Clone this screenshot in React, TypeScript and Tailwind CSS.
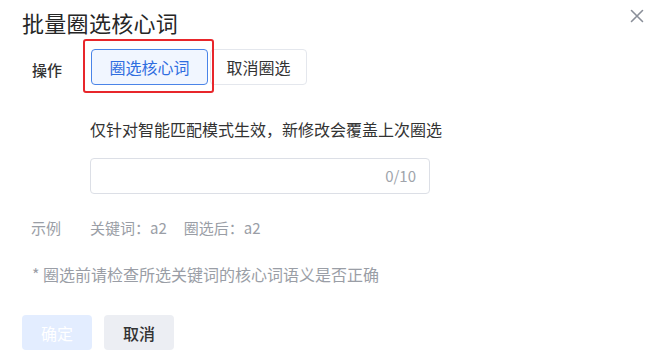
import React from "react";

export default function App() {
  return (
    <div
      className="relative w-[651px] h-[358px] bg-white overflow-hidden text-[#333]"
      style={{ fontFamily: '"Noto Sans CJK SC", "Noto Sans", sans-serif' }}
    >
      {/* close */}
      <button className="absolute left-[630px] top-[9px] w-[14px] h-[14px] flex items-center justify-center">
        <svg width="14" height="14" viewBox="0 0 14 14" fill="none">
          <path d="M1.5 1.5L12.5 12.5M12.5 1.5L1.5 12.5" stroke="#8a8f99" strokeWidth="1.6" strokeLinecap="round" />
        </svg>
      </button>

      <div className="flex flex-col">
        <div className="pl-[22px] pt-[7px] text-[22px] leading-[30px] tracking-[0.3px] text-[#262626]">批量圈选核心词</div>

        {/* operation row */}
        <div className="flex items-center mt-[12px] pl-[32px]">
          <div className="w-[59px] text-[15px] leading-[24px] font-medium text-[#333] pt-[6px]">操作</div>
          <div className="relative flex gap-[2px]">
            <button className="w-[117px] h-[36px] rounded-[4px] border border-[#4a84e8] bg-[#f1f6ff] text-[16px] leading-[24px] text-[#2f6de0]">
              圈选核心词
            </button>
            <button className="w-[97px] h-[36px] rounded-[4px] border border-[#e4e7ed] bg-white text-[16px] leading-[24px] text-[#333]">
              取消圈选
            </button>
            <div className="absolute left-[-8px] top-[-10px] w-[131px] h-[54px] border-2 border-[#e8262b] rounded-[3px] pointer-events-none" />
          </div>
        </div>

        <div className="mt-[32px] pl-[90px] text-[16px] leading-[24px] text-[#333]">
          仅针对智能匹配模式生效，新修改会覆盖上次圈选
        </div>

        <div className="mt-[17px] ml-[90px] w-[340px] h-[36px] rounded-[4px] border border-[#dcdfe6] flex items-center justify-end pr-[13px]">
          <span className="text-[15px] leading-[24px] text-[#a0a4ab]">0/10</span>
        </div>

        <div className="mt-[22px] pl-[31px] flex text-[15px] leading-[24px] text-[#9a9ea6]">
          <span className="w-[59px]">示例</span>
          <span>关键词：a2</span>
          <span className="ml-[17px]">圈选后：a2</span>
        </div>

        <div className="mt-[22px] pl-[32px] text-[16px] leading-[24px] text-[#9a9ea6]">
          * 圈选前请检查所选关键词的核心词语义是否正确
        </div>

        <div className="mt-[29px] pl-[22px] flex gap-[12px]">
          <button className="w-[70px] h-[35px] rounded-[4px] bg-[#e3edff] text-white text-[16px] leading-[24px]">
            确定
          </button>
          <button className="w-[70px] h-[35px] rounded-[4px] bg-[#eceef3] text-[#333] text-[16px] leading-[24px] font-medium">
            取消
          </button>
        </div>
      </div>
    </div>
  );
}
